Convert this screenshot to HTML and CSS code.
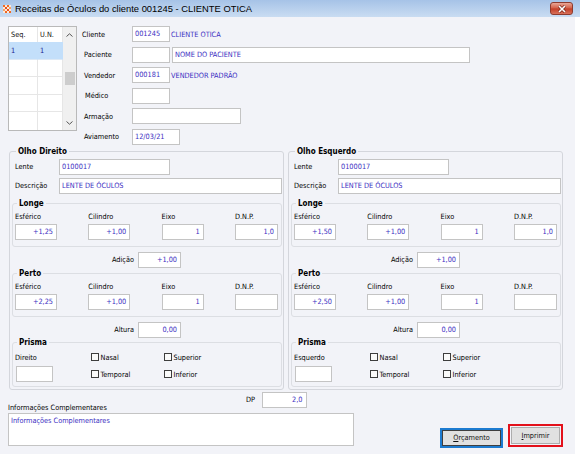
FILE: index.html
```html
<!DOCTYPE html>
<html lang="pt-BR">
  <head>
    <meta charset="UTF-8" />
    <title>Receitas de Óculos</title>
    <link rel="stylesheet" href="styles.css">
  </head>
  <body>
    <div class="window">
      <div class="titlebar">
        <svg class="app-icon" viewBox="0 0 8 8" width="8" height="8">
          <rect width="8" height="8" fill="#fbe9dc"/>
          <rect x="0" y="0" width="2" height="2" fill="#f06a22"/>
          <rect x="4" y="0" width="2" height="2" fill="#f06a22"/>
          <rect x="2" y="2" width="2" height="2" fill="#e8501a"/>
          <rect x="6" y="2" width="2" height="2" fill="#f6a064"/>
          <rect x="0" y="4" width="2" height="2" fill="#f6a064"/>
          <rect x="4" y="4" width="2" height="2" fill="#e8501a"/>
          <rect x="2" y="6" width="2" height="2" fill="#f06a22"/>
          <rect x="6" y="6" width="2" height="2" fill="#f06a22"/>
        </svg>
        <span class="title">Receitas de Óculos do cliente 001245 - CLIENTE OTICA</span>
        <span class="close">
          <svg viewBox="0 0 10 8" width="10" height="8">
            <path d="M2 1 L8 7 M8 1 L2 7" stroke="#7a2a1e" stroke-width="3" fill="none"/>
            <path d="M2 1 L8 7 M8 1 L2 7" stroke="#fff" stroke-width="1.6" fill="none"/>
          </svg>
        </span>
      </div>

      <div class="content">
        <div class="top">
          <div class="list">
            <div class="list-table">
              <div class="cell head">Seq.</div>
              <div class="cell head">U.N.</div>
              <div class="cell sel">1</div>
              <div class="cell sel">1</div>
              <div class="cell"></div><div class="cell"></div>
              <div class="cell"></div><div class="cell"></div>
              <div class="cell"></div><div class="cell"></div>
              <div class="cell last"></div><div class="cell last"></div>
            </div>
            <div class="vscroll">
              <span class="arrow">
                <svg viewBox="0 0 7 4" width="7" height="4"><path d="M0.5 3.5 L3.5 0.8 L6.5 3.5" stroke="#555" fill="none"/></svg>
              </span>
              <div class="track"><div class="thumb"></div></div>
              <span class="arrow">
                <svg viewBox="0 0 7 4" width="7" height="4"><path d="M0.5 0.5 L3.5 3.2 L6.5 0.5" stroke="#555" fill="none"/></svg>
              </span>
            </div>
          </div>

          <div class="head-form">
            <span class="lbl flush">Cliente</span>
            <div class="frow"><span class="field w38">001245</span><span class="static">CLIENTE OTICA</span></div>
            <span class="lbl">Paciente</span>
            <div class="frow"><span class="field w38"></span><span class="field w298">NOME DO PACIENTE</span></div>
            <span class="lbl">Vendedor</span>
            <div class="frow"><span class="field w38">000181</span><span class="static">VENDEDOR PADRÃO</span></div>
            <span class="lbl med">Médico</span>
            <div class="frow"><span class="field w38"></span></div>
            <span class="lbl">Armação</span>
            <div class="frow"><span class="field w109"></span></div>
            <span class="lbl">Aviamento</span>
            <div class="frow"><span class="field w48">12/03/21</span></div>
          </div>
        </div>

        <div class="eyes">
          <fieldset class="group eye">
            <legend>Olho Direito</legend>
            <div class="eye-head">
              <span>Lente</span><span class="field w111">0100017</span>
              <span>Descrição</span><span class="field">LENTE DE ÓCULOS</span>
            </div>
            <fieldset class="group sub">
              <legend>Longe</legend>
              <div class="vals">
                <span>Esférico</span><span>Cilindro</span><span>Eixo</span><span>D.N.P.</span>
                <span class="field num">+1,25</span>
                <span class="field num">+1,00</span>
                <span class="field num">1</span>
                <span class="field num wide">1,0</span>
              </div>
            </fieldset>
            <div class="extra"><span>Adição</span><span class="field num">+1,00</span></div>
            <fieldset class="group sub near">
              <legend>Perto</legend>
              <div class="vals">
                <span>Esférico</span><span>Cilindro</span><span>Eixo</span><span>D.N.P.</span>
                <span class="field num">+2,25</span>
                <span class="field num">+1,00</span>
                <span class="field num">1</span>
                <span class="field num wide"></span>
              </div>
            </fieldset>
            <div class="extra"><span>Altura</span><span class="field num">0,00</span></div>
            <fieldset class="group sub prism">
              <legend>Prisma</legend>
              <div class="prism-grid">
                <span>Direito</span>
                <label class="check"><span class="box"></span>Nasal</label>
                <label class="check"><span class="box"></span>Superior</label>
                <span class="field w37"></span>
                <label class="check"><span class="box"></span>Temporal</label>
                <label class="check"><span class="box"></span>Inferior</label>
              </div>
            </fieldset>
          </fieldset>

          <fieldset class="group eye">
            <legend>Olho Esquerdo</legend>
            <div class="eye-head">
              <span>Lente</span><span class="field w111">0100017</span>
              <span>Descrição</span><span class="field">LENTE DE ÓCULOS</span>
            </div>
            <fieldset class="group sub">
              <legend>Longe</legend>
              <div class="vals">
                <span>Esférico</span><span>Cilindro</span><span>Eixo</span><span>D.N.P.</span>
                <span class="field num">+1,50</span>
                <span class="field num">+1,00</span>
                <span class="field num">1</span>
                <span class="field num wide">1,0</span>
              </div>
            </fieldset>
            <div class="extra"><span>Adição</span><span class="field num">+1,00</span></div>
            <fieldset class="group sub near">
              <legend>Perto</legend>
              <div class="vals">
                <span>Esférico</span><span>Cilindro</span><span>Eixo</span><span>D.N.P.</span>
                <span class="field num">+2,50</span>
                <span class="field num">+1,00</span>
                <span class="field num">1</span>
                <span class="field num wide"></span>
              </div>
            </fieldset>
            <div class="extra"><span>Altura</span><span class="field num">0,00</span></div>
            <fieldset class="group sub prism">
              <legend>Prisma</legend>
              <div class="prism-grid">
                <span>Esquerdo</span>
                <label class="check"><span class="box"></span>Nasal</label>
                <label class="check"><span class="box"></span>Superior</label>
                <span class="field w37"></span>
                <label class="check"><span class="box"></span>Temporal</label>
                <label class="check"><span class="box"></span>Inferior</label>
              </div>
            </fieldset>
          </fieldset>
        </div>

        <div class="footer">
          <div class="dp"><span>DP</span><span class="field num w45">2,0</span></div>
          <span class="info-label">Informações Complementares</span>
          <div class="notes">Informações Complementares</div>
          <div class="buttons">
            <span class="btn default"><u>O</u>rçamento</span>
            <span class="marked"><span class="btn"><u>I</u>mprimir</span></span>
          </div>
        </div>
      </div>
    </div>
  </body>
</html>
```

FILE: styles.css
```css
* {
  box-sizing: border-box;
}

body {
  margin: 0;
  background: #ffffff;
  font-family: "DejaVu Sans Condensed", "Liberation Sans", Arial, sans-serif;
  font-size: 7.3px;
  color: #000;
}

.window {
  width: 580px;
  height: 454px;
}

/* title bar */
.titlebar {
  height: 17px;
  display: flex;
  align-items: center;
  padding-left: 3px;
  background: linear-gradient(#a6c3e7, #c9dcf2);
}

.app-icon {
  margin-right: 4px;
}

.title {
  flex: 1;
  font-family: "Liberation Sans", Arial, sans-serif;
  font-size: 9.4px;
  color: #000;
}

.close {
  width: 23px;
  height: 13px;
  margin-right: 7px;
  border: 1px solid #8d3b2e;
  border-radius: 3px;
  background: linear-gradient(#e9a797, #d35d45 48%, #c23d26 52%, #d9715a);
  display: flex;
  align-items: center;
  justify-content: center;
}

/* window body */
.content {
  width: 575px;
  height: 437px;
  background: #f2f3f8;
  padding: 9px 0 0 8px;
}

.top {
  display: flex;
}

.list {
  width: 69px;
  height: 105px;
  border: 1px solid #b9b9b9;
  background: #fff;
  display: flex;
}

.list-table {
  display: grid;
  grid-template-columns: 29px 25px;
  grid-template-rows: 15px repeat(5, 17.6px);
}

.cell {
  border-right: 1px solid #e6e6e6;
  border-bottom: 1px solid #e6e6e6;
  padding-left: 2px;
  display: flex;
  align-items: center;
  color: #1a1a90;
}

.cell.head {
  border-bottom: none;
  color: #111;
}

.cell.sel {
  background: #c3dffa;
  border-right-color: #c3dffa;
  border-bottom-color: #dde9f5;
}

.cell.last {
  border-bottom: none;
}

.vscroll {
  width: 13px;
  background: #f0f0f0;
  display: flex;
  flex-direction: column;
}

.arrow {
  height: 15px;
  display: flex;
  align-items: center;
  justify-content: center;
}

.track {
  flex: 1;
  padding: 30px 1px 0 2px;
}

.thumb {
  height: 12.6px;
  background: #cdcdcd;
}

/* client form */
.head-form {
  margin-left: 5px;
  display: grid;
  grid-template-columns: 50px auto;
  grid-auto-rows: 16px;
  row-gap: 4.5px;
  align-items: center;
}

.lbl {
  padding-left: 2px;
}

.lbl.flush {
  padding-left: 0;
}

.lbl.med {
  padding-left: 3px;
}

.frow {
  display: flex;
  align-items: center;
}

.field {
  display: block;
  height: 16px;
  border: 1px solid #c4c4c4;
  background: #fff;
  color: #3a2ec2;
  line-height: 14px;
  padding: 0 2px;
  white-space: nowrap;
  overflow: hidden;
}

.num {
  text-align: right;
  padding-right: 3px;
}

.w37 { width: 37px; margin-left: 1px; }
.w38 { width: 38px; }
.w45 { width: 45px; }
.w48 { width: 48px; }
.w109 { width: 109px; }
.w111 { width: 111px; }
.w298 { width: 298px; margin-left: 2px; }

.static {
  color: #3a2ec2;
  margin-left: 1px;
}

/* group boxes */
.group {
  margin: 0;
  padding: 0 1px 2px 2px;
  min-width: 0;
  border: 1px solid #d4d6dc;
  border-radius: 3px;
}

.group legend {
  margin-left: 4px;
  padding: 0 2px;
  font-size: 8px;
  font-weight: bold;
  line-height: 10px;
  color: #000;
}

.eyes {
  display: flex;
  gap: 4px;
  margin: 2px 0 0 1px;
}

.eye {
  width: 275px;
}

.eye-head {
  display: grid;
  grid-template-columns: 44px auto;
  grid-auto-rows: 16px;
  row-gap: 3.3px;
  align-items: center;
  padding: 2px 0 0 3px;
}

.sub {
  margin-top: 5px;
  padding: 0;
  border-color: #dcdee3;
}

.sub.near {
  margin-top: 1px;
}

.sub.prism {
  margin-top: 0;
}

.vals {
  display: grid;
  grid-template-columns: 73.3px 73.3px 73.3px auto;
  grid-template-rows: 10px 16px;
  row-gap: 2.5px;
  padding: 3px 0 6px 2px;
  line-height: 10px;
}

.vals .field {
  width: 42px;
  line-height: 14px;
}

.vals .field.wide {
  width: 43px;
}

.extra {
  display: grid;
  grid-template-columns: 122px 43px;
  column-gap: 4px;
  align-items: center;
  margin-top: 4.5px;
}

.extra span:first-child {
  text-align: right;
}

.prism-grid {
  display: grid;
  grid-template-columns: 74px 73px auto;
  grid-template-rows: 17px 17px;
  align-items: center;
  padding: 1px 0 3px 2px;
}

.check {
  display: flex;
  align-items: center;
  gap: 2px;
  padding-left: 1.5px;
}

.box {
  width: 8px;
  height: 8px;
  border: 1px solid #3d3d3d;
  background: #fafafa;
}

/* bottom area */
.footer {
  display: grid;
  grid-template-columns: 224px 122px 1fr;
  grid-template-rows: 13px 10px 35px;
}

.dp {
  grid-column: 2;
  grid-row: 1 / 3;
  align-self: start;
  margin-top: 2px;
  padding-left: 14px;
  display: flex;
  align-items: center;
  gap: 6.5px;
}

.info-label {
  grid-column: 1;
  grid-row: 2;
  line-height: 10px;
}

.notes {
  grid-column: 1 / 3;
  grid-row: 3;
  height: 33px;
  border: 1px solid #c4c4c4;
  background: #fff;
  color: #3a2ec2;
  padding: 2px 2px;
}

.buttons {
  grid-column: 3;
  grid-row: 3;
  display: flex;
  justify-content: flex-end;
  align-items: flex-end;
  gap: 5px;
  padding-right: 12px;
}

.btn {
  display: flex;
  align-items: center;
  justify-content: center;
  border: 1px solid #adadad;
  background: #e1e1e1;
  color: #111;
}

.btn.default {
  width: 63px;
  height: 20px;
  border: 2px solid #1d7bd0;
  box-shadow: inset 0 0 0 1px #3f3f3f;
}

.marked {
  width: 55px;
  height: 23px;
  margin-bottom: 1px;
  border: 2px solid #e3111b;
  padding: 1px;
  display: flex;
}

.marked .btn {
  flex: 1;
}
```
